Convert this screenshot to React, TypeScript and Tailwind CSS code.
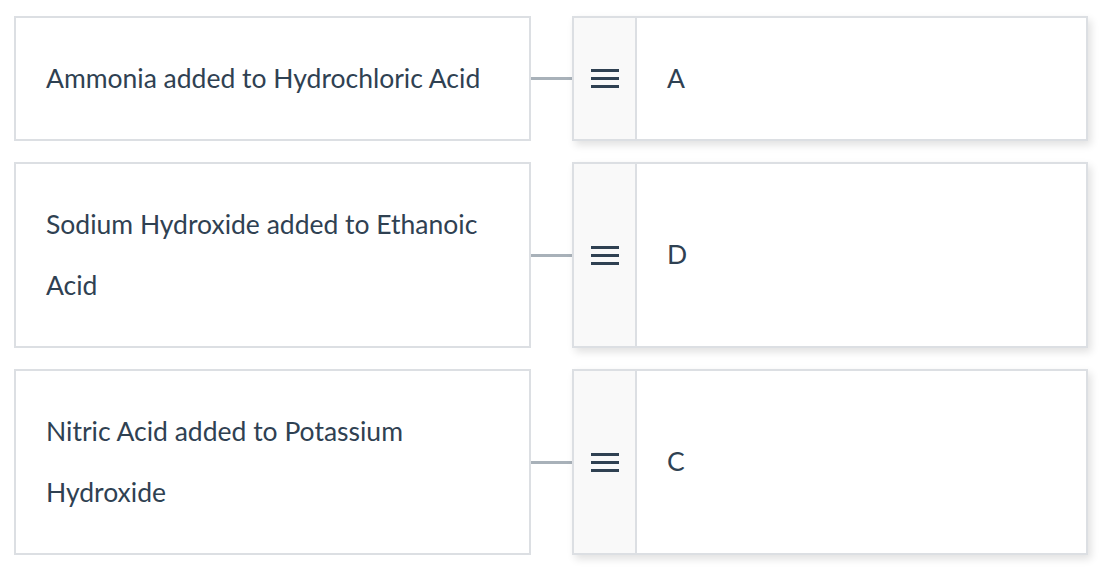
import React from "react";

const rows = [
  { prompt: "Ammonia added to Hydrochloric Acid", answer: "A" },
  { prompt: "Sodium Hydroxide added to Ethanoic Acid", answer: "D" },
  { prompt: "Nitric Acid added to Potassium Hydroxide", answer: "C" },
];

function Handle() {
  return (
    <svg width="28" height="19" viewBox="0 0 28 19" className="text-[#2f4152]">
      <rect x="0" y="0" width="28" height="3" fill="currentColor" />
      <rect x="0" y="8" width="28" height="3" fill="currentColor" />
      <rect x="0" y="16" width="28" height="3" fill="currentColor" />
    </svg>
  );
}

export default function App() {
  return (
    <div className="w-[1100px] h-[572px] bg-white pt-4 pl-[14px] font-['Lato','Open_Sans',sans-serif] text-[#2f4152]">
      <div className="flex flex-col gap-[21px]">
        {rows.map((r) => (
          <div key={r.answer} className="flex items-stretch">
            <div className="w-[517px] border-2 border-[#dcdfe3] pl-[30px] pr-[30px] py-[30px] text-[26.5px] leading-[61px]">
              {r.prompt}
            </div>
            <div className="w-[41px] flex items-center">
              <div className="h-[3px] w-full bg-[#a8b1b9]" />
            </div>
            <div className="w-[516px] flex border-2 border-[#dcdfe3] bg-white shadow-[3px_4px_8px_rgba(0,0,0,0.12)]">
              <div className="w-[63px] bg-[#f9f9f9] border-r-2 border-[#dcdfe3] flex items-center justify-center">
                <Handle />
              </div>
              <div className="flex-1 flex items-center pl-[30px] text-[26.5px]">{r.answer}</div>
            </div>
          </div>
        ))}
      </div>
    </div>
  );
}
